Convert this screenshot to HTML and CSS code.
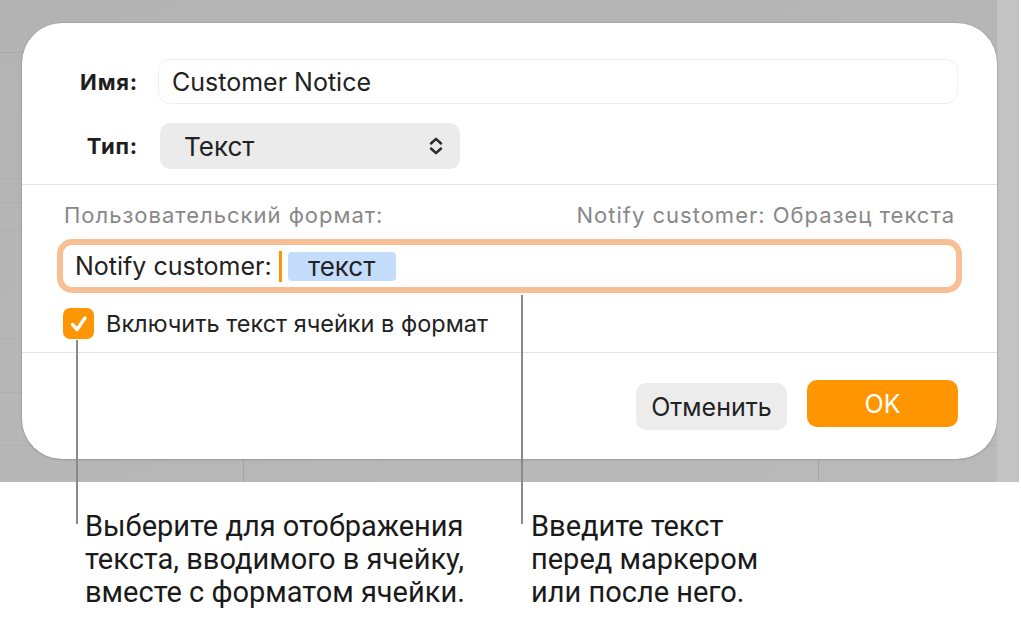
FILE: index.html
```html
<!DOCTYPE html>
<html lang="ru">
<head>
    <meta charset="UTF-8">
    <meta name="viewport" content="width=device-width, initial-scale=1.0">
    <title>Пользовательский формат</title>
    <link rel="stylesheet" href="styles.css">
</head>
<body>
    <div class="screen">
        <div class="dialog">
            <!-- Name and type -->
            <div class="section section-top">
                <div class="field-row">
                    <span class="field-label">Имя:</span>
                    <div class="text-field">Customer Notice</div>
                </div>
                <div class="field-row">
                    <span class="field-label">Тип:</span>
                    <div class="popup">
                        <span>Текст</span>
                        <svg class="popup-arrows" width="14" height="20" viewBox="0 0 14 20">
                            <path d="M2 7.5 L7 2.8 L12 7.5" fill="none" stroke="#2b2b2b" stroke-width="2.5" stroke-linecap="round" stroke-linejoin="round"/>
                            <path d="M2 12.5 L7 17.2 L12 12.5" fill="none" stroke="#2b2b2b" stroke-width="2.5" stroke-linecap="round" stroke-linejoin="round"/>
                        </svg>
                    </div>
                </div>
            </div>

            <!-- Custom format -->
            <div class="section section-format">
                <div class="format-head">
                    <span>Пользовательский формат:</span>
                    <span>Notify customer: Образец текста</span>
                </div>
                <div class="token-field">
                    <span>Notify customer:</span>
                    <span class="caret"></span>
                    <span class="token">текст</span>
                </div>
                <div class="check-row">
                    <span class="checkbox">
                        <svg width="22" height="22" viewBox="0 0 22 22">
                            <path d="M4.5 11.5 L9 16.5 L17 5" fill="none" stroke="#fff" stroke-width="3.4" stroke-linecap="round" stroke-linejoin="round"/>
                        </svg>
                    </span>
                    <span>Включить текст ячейки в формат</span>
                </div>
            </div>

            <!-- Buttons -->
            <div class="section section-buttons">
                <button class="btn btn-cancel">Отменить</button>
                <button class="btn btn-ok">OK</button>
            </div>
        </div>
    </div>

    <div class="callouts">
        <p class="callout callout-check">Выберите для отображения<br>текста, вводимого в ячейку,<br>вместе с форматом ячейки.</p>
        <p class="callout callout-token">Введите текст<br>перед маркером<br>или после него.</p>
    </div>

    <span class="leader leader-check"></span>
    <span class="leader leader-token"></span>
</body>
</html>
```

FILE: styles.css
```css
body {
    margin: 0;
    background: #fff;
    font-family: Inter, "Noto Sans", sans-serif;
    color: #222;
}

/* gray app window behind the sheet */
.screen {
    width: 1019px;
    height: 482px;
    box-sizing: border-box;
    padding: 23px 0 0 22px;
    background:
        linear-gradient(to right, transparent 997px, #c3c3c3 997px),
        linear-gradient(to right, transparent 243px, #a6a6a6 243px, #a6a6a6 244px, transparent 244px, transparent 818px, #a6a6a6 818px, #a6a6a6 819px, transparent 819px) 0 459px / 100% 23px no-repeat,
        linear-gradient(to bottom, transparent 52px, #a9a9a9 52px, #a9a9a9 53px, transparent 53px,
            transparent 178px, #aeaeae 178px, #aeaeae 179px, transparent 179px,
            transparent 202px, #aeaeae 202px, #aeaeae 203px, transparent 203px,
            transparent 230px, #aeaeae 230px, #aeaeae 231px, transparent 231px,
            transparent 338px, #b0b0b0 338px, #b0b0b0 339px, transparent 339px,
            transparent 392px, #b0b0b0 392px, #b0b0b0 393px, transparent 393px,
            transparent 445px, #b0b0b0 445px, #b0b0b0 446px, transparent 446px),
        linear-gradient(160deg, #b3b3b3, #bababa);
}

.dialog {
    width: 975px;
    height: 436px;
    background: #fff;
    border-radius: 40px;
    box-shadow: 0 0 0 0.5px rgba(0, 0, 0, 0.12), 0 1px 3px rgba(0, 0, 0, 0.12);
    display: flex;
    flex-direction: column;
}

.section-top {
    padding: 36px 39px 15px 0;
    display: flex;
    flex-direction: column;
    gap: 19px;
    border-bottom: 1px solid #e4e4e4;
}

.field-row {
    display: flex;
    align-items: center;
}

.field-label {
    width: 116px;
    text-align: right;
    font-weight: 700;
    font-size: 22px;
    letter-spacing: 0.8px;
    color: #1e1e1e;
    margin-right: 20px;
}

.text-field {
    flex: 1;
    height: 45px;
    box-sizing: border-box;
    border: 1px solid #efefef;
    border-radius: 12px;
    padding-left: 13px;
    display: flex;
    align-items: center;
    font-size: 25px;
}

.popup {
    width: 300px;
    height: 46px;
    box-sizing: border-box;
    margin-left: 2px;
    background: #ebebeb;
    border-radius: 10px;
    padding: 0 17px 0 24px;
    display: flex;
    align-items: center;
    justify-content: space-between;
    font-size: 26px;
}

.section-format {
    height: 168px;
    box-sizing: border-box;
    padding: 17px 35px 0;
    border-bottom: 1px solid #e4e4e4;
}

.format-head {
    display: flex;
    justify-content: space-between;
    padding: 0 7px;
    font-size: 22px;
    letter-spacing: 1px;
    color: #888;
}

.token-field {
    margin-top: 11px;
    height: 54px;
    box-sizing: border-box;
    border: 6px solid #f7bf93;
    border-radius: 15px;
    padding-left: 12px;
    display: flex;
    align-items: center;
    font-size: 25px;
}

.caret {
    width: 3px;
    height: 31px;
    background: #ff9500;
    margin: 0 6px 0 7px;
}

.token {
    width: 108px;
    height: 29px;
    background: #c5ddfd;
    border-radius: 4px;
    display: flex;
    align-items: center;
    justify-content: center;
    font-size: 26px;
}

.check-row {
    margin-top: 15px;
    padding-left: 6px;
    display: flex;
    align-items: center;
    gap: 12px;
    font-size: 23.5px;
}

.checkbox {
    width: 31px;
    height: 31px;
    background: #ff9500;
    border-radius: 7px;
    display: flex;
    align-items: center;
    justify-content: center;
}

.section-buttons {
    flex: 1;
    display: flex;
    justify-content: flex-end;
    align-items: flex-start;
    gap: 20px;
    padding: 27px 39px 0 0;
}

.btn {
    height: 47px;
    width: 151px;
    border: none;
    border-radius: 10px;
    font-family: inherit;
    font-size: 25px;
}

.btn-cancel {
    margin-top: 3px;
    background: #ececec;
    color: #222;
}

.btn-ok {
    background: #ff9500;
    color: #fff;
}

/* annotation text below the screenshot */
.callouts {
    display: flex;
    padding-top: 28px;
}

.callout {
    margin: 0;
    font-family: Roboto, sans-serif;
    font-size: 29px;
    line-height: 33px;
    color: #1a1a1a;
}

.callout-check {
    margin-left: 85px;
    width: 446px;
}

.leader {
    position: absolute;
    width: 2px;
    background: #8a8a8a;
}

.leader-check {
    left: 76px;
    top: 340px;
    height: 184px;
}

.leader-token {
    left: 521px;
    top: 295px;
    height: 229px;
}
```
